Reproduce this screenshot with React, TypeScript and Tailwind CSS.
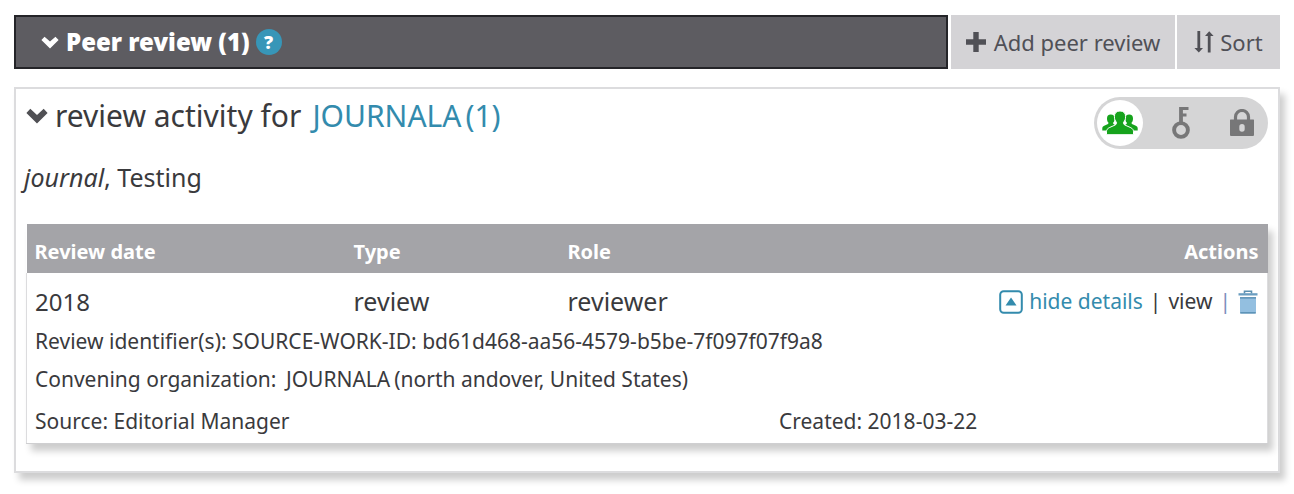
import React, { useState } from 'react';

const ChevronIcon: React.FC<{ className?: string }> = ({ className }) => (
  <svg viewBox="0 0 22 16" className={className} fill="currentColor" aria-hidden="true">
    <path d="M4.300.8 11 6.900 17.700.8l3.900 4.200L11 15.500.4 5z" />
  </svg>
);

const PlusIcon = () => (
  <svg viewBox="0 0 20 20" className="h-5 w-5" fill="currentColor" aria-hidden="true">
    <path d="M7.3 0h5.4v7.3H20v5.4h-7.3V20H7.3v-7.3H0V7.3h7.3z" />
  </svg>
);

const SortIcon = () => (
  <svg viewBox="0 0 20 22" className="h-[22px] w-5" fill="currentColor" aria-hidden="true">
    <path d="M3.4 0h2.8v17H9l-4.2 4.6L.4 17h3z" />
    <path d="M13.8 21.6h2.8V5h3L15.2.2 11 5h2.8z" />
  </svg>
);

const PeopleIcon = () => (
  <svg viewBox="0 0 36 24" className="h-6 w-9" aria-hidden="true">
    <g fill="currentColor">
      <path d="M8.800 3.500c2.600 0 3.800 1.600 3.800 3.900 0 2-.5 3.200-1.400 4.200-.2 1 .1 1.500.9 1.900L16 15.500v4H.3v-2.200c0-1.300.7-2 1.900-2.500l3.300-1.500c.8-.4 1.100-.9.900-1.700C5.500 10.600 5 9.400 5 7.400c0-2.300 1.200-3.900 3.800-3.900z" />
      <path d="M27.200 3.500c-2.600 0-3.800 1.600-3.800 3.900 0 2 .5 3.200 1.400 4.200.2 1-.1 1.500-.9 1.900L20 15.500v4h15.700v-2.200c0-1.300-.7-2-1.900-2.500l-3.300-1.500c-.8-.4-1.100-.9-.9-1.700.9-1 1.400-2.200 1.400-4.200 0-2.300-1.200-3.900-3.800-3.900z" />
    </g>
    <path
      fill="currentColor"
      stroke="white"
      strokeWidth="1"
      d="M18 0c3.700 0 5.600 2.200 5.600 5.600 0 2.600-.8 4.300-2 5.600-.2 1.500.2 2.300 1.400 2.900l5.200 2.300c2.600 1.200 3.300 2.500 3.300 4.300v3h-27v-3c0-1.800.7-3.100 3.300-4.300l5.200-2.300c1.200-.6 1.600-1.400 1.400-2.900-1.200-1.300-2-3-2-5.600C12.400 2.200 14.300 0 18 0z"
    />
  </svg>
);

const KeyIcon = () => (
  <svg viewBox="0 0 20 32" className="h-8 w-5" fill="none" stroke="currentColor" aria-hidden="true">
    <circle cx="10" cy="23" r="6.900" strokeWidth="3.900" />
    <path d="M10 16V0" strokeWidth="3.800" />
    <path d="M10 1.500h7.500M10 8h5.500" strokeWidth="3" />
  </svg>
);

const LockIcon = () => (
  <svg viewBox="0 0 26 28" className="h-7 w-[26px]" aria-hidden="true">
    <path d="M6.500 11V8a6.500 6.500 0 0 1 13 0v3" fill="none" stroke="currentColor" strokeWidth="3.200" />
    <path
      fill="currentColor"
      fillRule="evenodd"
      d="M1.500 10.500h23a.5.500 0 0 1 .5.500V26a1 1 0 0 1-1 1H2a1 1 0 0 1-1-1V11a.5.500 0 0 1 .5-.5zM13 15a2.700 2.700 0 0 0-2.700 2.700v2.300a2.700 2.700 0 0 0 5.400 0v-2.300A2.700 2.700 0 0 0 13 15z"
    />
  </svg>
);

const HideIcon = () => (
  <svg viewBox="0 0 24 24" className="h-6 w-6" aria-hidden="true">
    <rect x="1.200" y="1.200" width="21.600" height="21.600" rx="3.500" fill="none" stroke="currentColor" strokeWidth="2" />
    <path d="M12 7.500 17.500 15.500h-11z" fill="currentColor" />
  </svg>
);

const TrashIcon = () => (
  <svg viewBox="0 0 20 24" className="h-6 w-5" aria-hidden="true">
    <path d="M6.500 3.500V1.200h7v2.300" fill="none" stroke="#5b8fb0" strokeWidth="1.600" />
    <rect x="0.500" y="3.200" width="19" height="2.300" fill="#6a9dc0" />
    <path d="M2 7.200h16V22a1.500 1.500 0 0 1-1.500 1.500h-13A1.500 1.500 0 0 1 2 22z" fill="#93bfe0" />
    <path d="M2 7.200h16v1.300H2zM2.200 22.200h15.600v1.300H2.200z" fill="#4d86ab" />
  </svg>
);

const visibilityOptions = [
  { id: 'public', label: 'Everyone', icon: <PeopleIcon /> },
  { id: 'limited', label: 'Trusted parties', icon: <KeyIcon /> },
  { id: 'private', label: 'Only me', icon: <LockIcon /> },
];

const VisibilityToggle: React.FC = () => {
  const [visibility, setVisibility] = useState('public');

  return (
    <div className="flex h-[52px] w-[174px] shrink-0 items-center justify-between rounded-full bg-[#d5d5d6] px-[3px]">
      {visibilityOptions.map((option) => (
        <button
          key={option.id}
          type="button"
          aria-label={option.label}
          aria-pressed={visibility === option.id}
          onClick={() => setVisibility(option.id)}
          className={`flex h-[46px] w-[46px] items-center justify-center rounded-full ${
            visibility === option.id ? 'bg-white text-[#16a31c]' : 'text-[#777778]'
          }`}
        >
          {option.icon}
        </button>
      ))}
    </div>
  );
};

const App: React.FC = () => {
  const [open, setOpen] = useState(true);
  const [showDetails, setShowDetails] = useState(true);

  return (
    <main className="bg-white px-[14px] pt-[15px] pb-[22px] font-['Noto_Sans',sans-serif] text-[#3a3a3d]">
      {/* Section header */}
      <div className="flex h-[54px] items-stretch">
        <div className="flex flex-1 items-center border-2 border-[#242428] bg-[#5d5c61] pl-[25px] text-white">
          <button type="button" onClick={() => setOpen(!open)} className="flex items-center gap-[7px]">
            <ChevronIcon className="h-[13px] w-[18px]" />
            <span className="text-2xl font-black">Peer review (1)</span>
          </button>
          <button
            type="button"
            aria-label="Help"
            className="ml-[6px] flex h-[26px] w-[26px] items-center justify-center rounded-full bg-[#3796b8] text-lg font-black"
          >
            ?
          </button>
        </div>
        <button type="button" className="ml-[3px] flex w-[224px] items-center justify-center gap-2 bg-[#d4d3d6] text-[22px] text-[#505056]">
          <PlusIcon />
          Add peer review
        </button>
        <button type="button" className="ml-[2px] flex w-[103px] items-center justify-center gap-[6px] bg-[#d4d3d6] text-[22px] text-[#505056]">
          <SortIcon />
          Sort
        </button>
      </div>

      {open && (
        <section className="mt-[18px] border-2 border-[#dcdcde] px-[10px] pb-[27px] shadow-[5px_7px_7px_rgba(0,0,0,0.2)]">
          <div className="flex items-start justify-between pt-2">
            <h2 className="flex items-center text-[30px] leading-[38px]">
              <ChevronIcon className="mr-[7px] h-4 w-[22px] text-[#505054]" />
              review activity for
              <a href="#journala" className="ml-[11px] text-[#338bad]">
                JOURNALA<span className="ml-1">(1)</span>
              </a>
            </h2>
            <VisibilityToggle />
          </div>

          <p className="mt-[11px] -ml-[2px] text-[25px] leading-[34px]">
            <i>journal</i>, Testing
          </p>

          <div className="mt-[30px] shadow-[5px_7px_7px_rgba(0,0,0,0.2)]">
            <table className="w-full table-fixed text-left">
              <thead className="bg-[#a4a4a8] text-xl text-white">
                <tr className="h-[49px]">
                  <th className="w-[319px] pt-[6px] pl-2 font-bold">Review date</th>
                  <th className="w-[214px] pt-[6px] pl-2 font-bold">Type</th>
                  <th className="pt-[6px] pl-2 font-bold">Role</th>
                  <th className="pt-[6px] pr-[9px] text-right font-bold">Actions</th>
                </tr>
              </thead>
              <tbody className="border border-t-0 border-[#dcdcde] border-b-[#cfcfd1] text-[21px]">
                <tr className="h-[50px] text-[25px]">
                  <td className="pt-2 pl-2 text-2xl">2018</td>
                  <td className="pt-2 pl-2">review</td>
                  <td className="pt-2 pl-2">reviewer</td>
                  <td className="pt-2 pr-[9px]">
                    <div className="flex items-center justify-end gap-[7px] text-[21px]">
                      <button type="button" onClick={() => setShowDetails(!showDetails)} className="flex items-center gap-[6px] text-[#338bad]">
                        <HideIcon />
                        {showDetails ? 'hide details' : 'show details'}
                      </button>
                      |
                      <a href="#view">view</a>
                      <span className="text-[#7d8fbd]">|</span>
                      <button type="button" aria-label="Delete">
                        <TrashIcon />
                      </button>
                    </div>
                  </td>
                </tr>
                {showDetails && (
                  <>
                    <tr className="h-[38px]">
                      <td colSpan={4} className="pl-2">
                        Review identifier(s): SOURCE-WORK-ID: bd61d468-aa56-4579-b5be-7f097f07f9a8
                      </td>
                    </tr>
                    <tr className="h-[38px]">
                      <td colSpan={4} className="pl-2">
                        Convening organization: <span className="mx-1">JOURNALA</span>(north andover, United States)
                      </td>
                    </tr>
                  </>
                )}
                <tr className="h-[44px]">
                  <td colSpan={4} className="pt-[2px] pl-2">
                    <div className="grid grid-cols-[3fr_2fr] gap-3">
                      <span>Source: Editorial Manager</span>
                      <span>Created: 2018-03-22</span>
                    </div>
                  </td>
                </tr>
              </tbody>
            </table>
          </div>
        </section>
      )}
    </main>
  );
};

export default App;
